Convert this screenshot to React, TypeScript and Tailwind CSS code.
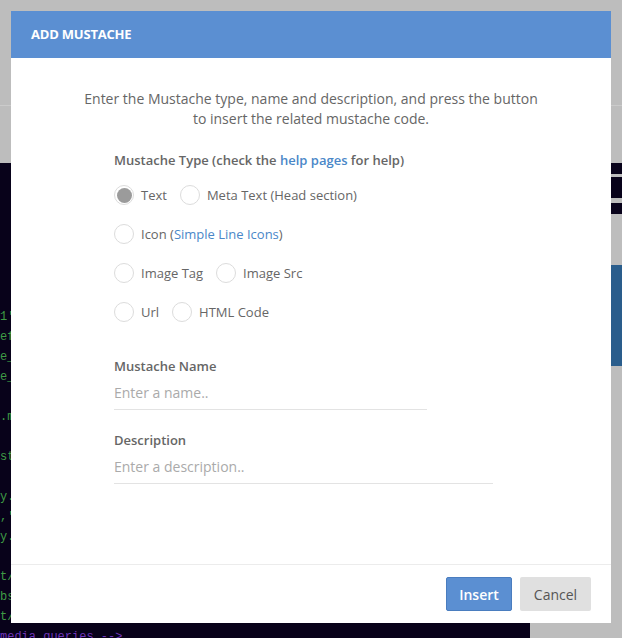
import React from "react";

const codeLines: { t: string; c?: string }[] = [
  { t: "1'>" },
  { t: "ef=\"css/style.css\"" },
  { t: "e_menu.css\"" },
  { t: "e_print.css\"" },
  { t: "" },
  { t: ".min.css\"" },
  { t: "" },
  { t: "st.css\"" },
  { t: "" },
  { t: "y.min.js\"" },
  { t: ",'" },
  { t: "y.min.js\"" },
  { t: "" },
  { t: "t/javascript\"" },
  { t: "bs.js\"" },
  { t: "t/javascript\"" },
  { t: "media queries -->", c: "text-[#6f35b8]" },
];

function Radio({ label, checked }: { label: React.ReactNode; checked?: boolean }) {
  return (
    <div className="flex items-center gap-[7px]">
      <div className="w-[20px] h-[20px] rounded-full border border-[#dcdcdc] bg-white flex items-center justify-center">
        {checked && <div className="w-[15px] h-[15px] rounded-full bg-[#9b9b9b]" />}
      </div>
      <span className="text-[13px] leading-[20px] text-[#666]">{label}</span>
    </div>
  );
}

export default function App() {
  return (
    <div
      className="relative w-[622px] h-[638px] overflow-hidden bg-[#bdbdbd]"
      style={{ fontFamily: '"Open Sans", "Noto Sans", sans-serif' }}
    >
      {/* background page */}
      <div className="h-[106px] border-b border-[#cbcbcb]" />
      <div className="h-[57px]" />
      <div className="flex h-[475px]">
        <div
          className="w-[530px] bg-[#08021a] pt-[144px] text-[12px] leading-[20px] text-[#3f9b45] whitespace-pre"
          style={{ fontFamily: '"Liberation Mono", "DejaVu Sans Mono", monospace' }}
        >
          {codeLines.map((l, i) => (
            <div key={i} className={`h-[20px] ${l.c ?? ""}`}>
              {l.t}
            </div>
          ))}
        </div>
        <div className="flex-1 flex flex-col">
          <div className="h-[11px] bg-[#08021a]" />
          <div className="h-[3px]" />
          <div className="h-[21px] bg-[#08021a]" />
          <div className="h-[5px]" />
          <div className="h-[11px] bg-[#08021a]" />
          <div className="h-[51px]" />
          <div className="h-[101px] bg-[#2a5d8c]" />
        </div>
      </div>

      {/* modal */}
      <div className="absolute left-[11px] top-[11px] w-[600px] h-[612px] bg-white flex flex-col">
        <div className="h-[47px] bg-[#5b8fd2] flex items-center pl-[20px]">
          <span className="text-white text-[13px] font-bold tracking-[-0.2px]">ADD MUSTACHE</span>
        </div>
        <div className="flex-1 flex flex-col">
          <p className="pt-[31px] text-center text-[14px] leading-[20px] text-[#666]">
            Enter the Mustache type, name and description, and press the button
            <br />
            to insert the related mustache code.
          </p>
          <div className="pl-[103px] pt-[22px] flex flex-col">
            <div className="text-[13px] leading-[18px] font-semibold text-[#666]">
              Mustache Type (check the <span className="text-[#4a87c8]">help pages</span> for help)
            </div>
            <div className="mt-[16px] flex flex-col gap-[19px]">
              <div className="flex gap-[13px]">
                <Radio label="Text" checked />
                <Radio label="Meta Text (Head section)" />
              </div>
              <div className="flex gap-[14px]">
                <Radio
                  label={
                    <>
                      Icon (<span className="text-[#4a87c8]">Simple Line Icons</span>)
                    </>
                  }
                />
              </div>
              <div className="flex gap-[13px]">
                <Radio label="Image Tag" />
                <Radio label="Image Src" />
              </div>
              <div className="flex gap-[13px]">
                <Radio label="Url" />
                <Radio label="HTML Code" />
              </div>
            </div>
            <div className="mt-[35px] text-[13px] leading-[18px] font-semibold text-[#666]">Mustache Name</div>
            <div className="mt-[1px] w-[313px] h-[34px] border-b border-[#e3e3e3] flex items-center text-[14px] text-[#aaa]">
              Enter a name..
            </div>
            <div className="mt-[21px] text-[13px] leading-[18px] font-semibold text-[#666]">Description</div>
            <div className="mt-[1px] w-[379px] h-[34px] border-b border-[#e3e3e3] flex items-center text-[14px] text-[#aaa]">
              Enter a description..
            </div>
          </div>
        </div>
        <div className="h-[59px] border-t border-[#ececec] flex items-center justify-end gap-[8px] pr-[20px]">
          <button className="h-[34px] w-[66px] rounded-[2px] bg-[#5b8fd2] border border-[#4a7dbf] text-white text-[14px] font-semibold">
            Insert
          </button>
          <button className="h-[34px] w-[71px] rounded-[2px] bg-[#e0e0e0] text-[#555] text-[14px]">
            Cancel
          </button>
        </div>
      </div>
    </div>
  );
}
